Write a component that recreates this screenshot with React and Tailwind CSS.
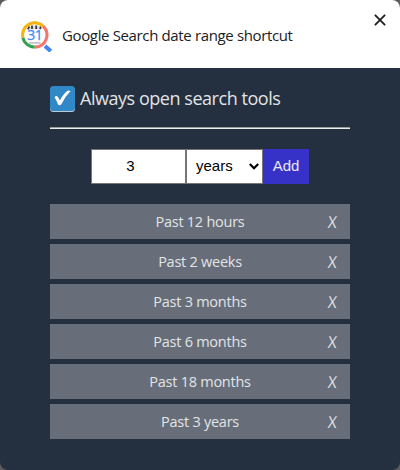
import { useState } from 'react'

const INITIAL_RANGES = [
  { id: 1, label: 'Past 12 hours' },
  { id: 2, label: 'Past 2 weeks' },
  { id: 3, label: 'Past 3 months' },
  { id: 4, label: 'Past 6 months' },
  { id: 5, label: 'Past 18 months' },
  { id: 6, label: 'Past 3 years' },
]

const UNITS = ['hours', 'days', 'weeks', 'months', 'years']

// Magnifier with a calendar page inside
function Logo() {
  return (
    <svg width="32" height="32" viewBox="0 0 32 32" className="shrink-0">
      <path d="M25 26 L30.8 31.2" stroke="#4285f4" strokeWidth="4" />
      <circle cx="14.8" cy="15" r="13.7" fill="#d0d0d0" />
      <circle cx="14.8" cy="15" r="10.8" fill="#fff" />
      <path d="M6.5 9.5 Q9 5.5 14.8 5.5 Q20.6 5.5 23 9.5 Z" fill="#dcdcdc" />
      <path d="M9 22.8 H20.6" stroke="#c4c4c4" strokeWidth="1.8" />
      <path d="M8 9.4 L9.2 6.4 M12 9 V5.4 M16.2 9 V5.4 M20 9 L20.8 6.4" stroke="#33363a" strokeWidth="1.7" />
      <path d="M2.9 17.5 A12.1 12.1 0 0 1 23.3 6.4" fill="none" stroke="#fbb408" strokeWidth="3" />
      <path d="M23.3 6.4 A12.1 12.1 0 0 1 14.5 27.1" fill="none" stroke="#fa746b" strokeWidth="3" />
      <path d="M14.5 27.1 A12.1 12.1 0 0 1 2.9 17.8" fill="none" stroke="#2fa44f" strokeWidth="3" />
      <text
        x="14.8"
        y="20.3"
        textAnchor="middle"
        fontSize="14"
        fill="#4285f4"
        stroke="#4285f4"
        strokeWidth="0.25"
        className="font-['Open_Sans',sans-serif] tracking-[-0.4px]"
      >
        31
      </text>
    </svg>
  )
}

function Header() {
  return (
    <header className="flex h-[68px] bg-white">
      <div className="flex flex-1 items-center gap-[10px] pl-5 pt-1">
        <Logo />
        <h1 className="-mt-0.5 whitespace-nowrap text-[15px] tracking-[-0.36px] text-[#202124]">
          Google Search date range shortcut
        </h1>
      </div>
      <button type="button" aria-label="Close" className="h-fit pr-[14px] pt-[14px]">
        <svg width="12" height="12" viewBox="0 0 12 12">
          <path d="M0.9 0.9 L11.1 11.1 M11.1 0.9 L0.9 11.1" stroke="#202124" strokeWidth="1.9" />
        </svg>
      </button>
    </header>
  )
}

function ToolsToggle({ checked, onChange }) {
  return (
    <label className="flex h-[27px] items-center gap-[5px]">
      <input type="checkbox" checked={checked} onChange={onChange} className="sr-only" />
      <svg width="25" height="26" viewBox="0 0 25 26" className="shrink-0">
        <rect x="0" y="1" width="25" height="25" rx="3.5" fill="#b9cbd8" />
        <rect x="0" y="0" width="25" height="25" rx="3.5" fill="#3088c6" />
        {checked && (
          <path d="M4.6 11.2 Q6 9.2 7.6 10.4 L9.9 14.4 Q13.4 7.6 18 4.6 L20.6 4.9 Q14.5 11 11.2 18.4 Q9.6 19.8 8 18.6 Q6.6 14.4 4.6 11.2 Z" fill="#fff" />
        )}
      </svg>
      <span className="whitespace-nowrap text-[18px] tracking-[-0.46px]">Always open search tools</span>
    </label>
  )
}

export default function App() {
  const [alwaysOpen, setAlwaysOpen] = useState(true)
  const [amount, setAmount] = useState('3')
  const [unit, setUnit] = useState('years')
  const [ranges, setRanges] = useState(INITIAL_RANGES)

  const addRange = () => {
    if (!amount.trim()) return
    setRanges([...ranges, { id: Date.now(), label: `Past ${amount} ${unit}` }])
  }

  return (
    <div className="h-[470px] w-[400px] bg-[#5c5c5c]">
      <div className="h-full overflow-hidden rounded-[8px] bg-[#242f3f] font-['Open_Sans','Noto_Sans',sans-serif] text-[#e2e4e6]">
        <Header />

        <main className="px-[50px] pt-[17px]">
          <ToolsToggle checked={alwaysOpen} onChange={() => setAlwaysOpen(!alwaysOpen)} />
          <hr className="mt-[15px] h-[2px] border-0 border-t border-[#9a9a9a] bg-[#eeeeee]" />

          {/* New range */}
          <div className="mt-5 flex h-[35px] justify-center font-['Liberation_Sans',Arial,sans-serif] text-[15px] text-black">
            <input
              value={amount}
              onChange={(e) => setAmount(e.target.value)}
              className="w-[95px] border border-[#767676] bg-white pr-[16px] text-center"
            />
            <div className="relative w-[77px]">
              <select
                value={unit}
                onChange={(e) => setUnit(e.target.value)}
                className="h-full w-full appearance-none border border-[#767676] bg-white pl-[9px]"
              >
                {UNITS.map((u) => (
                  <option key={u}>{u}</option>
                ))}
              </select>
              <svg width="10" height="7" viewBox="0 0 10 7" className="pointer-events-none absolute right-[4px] top-[14px]">
                <path d="M0.8 1 L5 5.3 L9.2 1" fill="none" stroke="#000" strokeWidth="2.2" />
              </svg>
            </div>
            <button type="button" onClick={addRange} className="w-[46px] bg-[#3632c8] text-[#e8e8f4]">
              Add
            </button>
          </div>

          {/* Saved ranges */}
          <ul className="mt-5 flex flex-col gap-[5px]">
            {ranges.map((range) => (
              <li key={range.id} className="flex h-[35px] items-center bg-[#676e79] text-[14.5px]">
                <span className="flex-1 whitespace-nowrap pl-[35px] text-center tracking-[-0.25px]">{range.label}</span>
                <button
                  type="button"
                  aria-label="Remove"
                  onClick={() => setRanges(ranges.filter((r) => r.id !== range.id))}
                  className="w-[35px]"
                >
                  <span className="inline-block -skew-x-6 scale-y-110 text-[15px] font-medium">X</span>
                </button>
              </li>
            ))}
          </ul>
        </main>
      </div>
    </div>
  )
}
